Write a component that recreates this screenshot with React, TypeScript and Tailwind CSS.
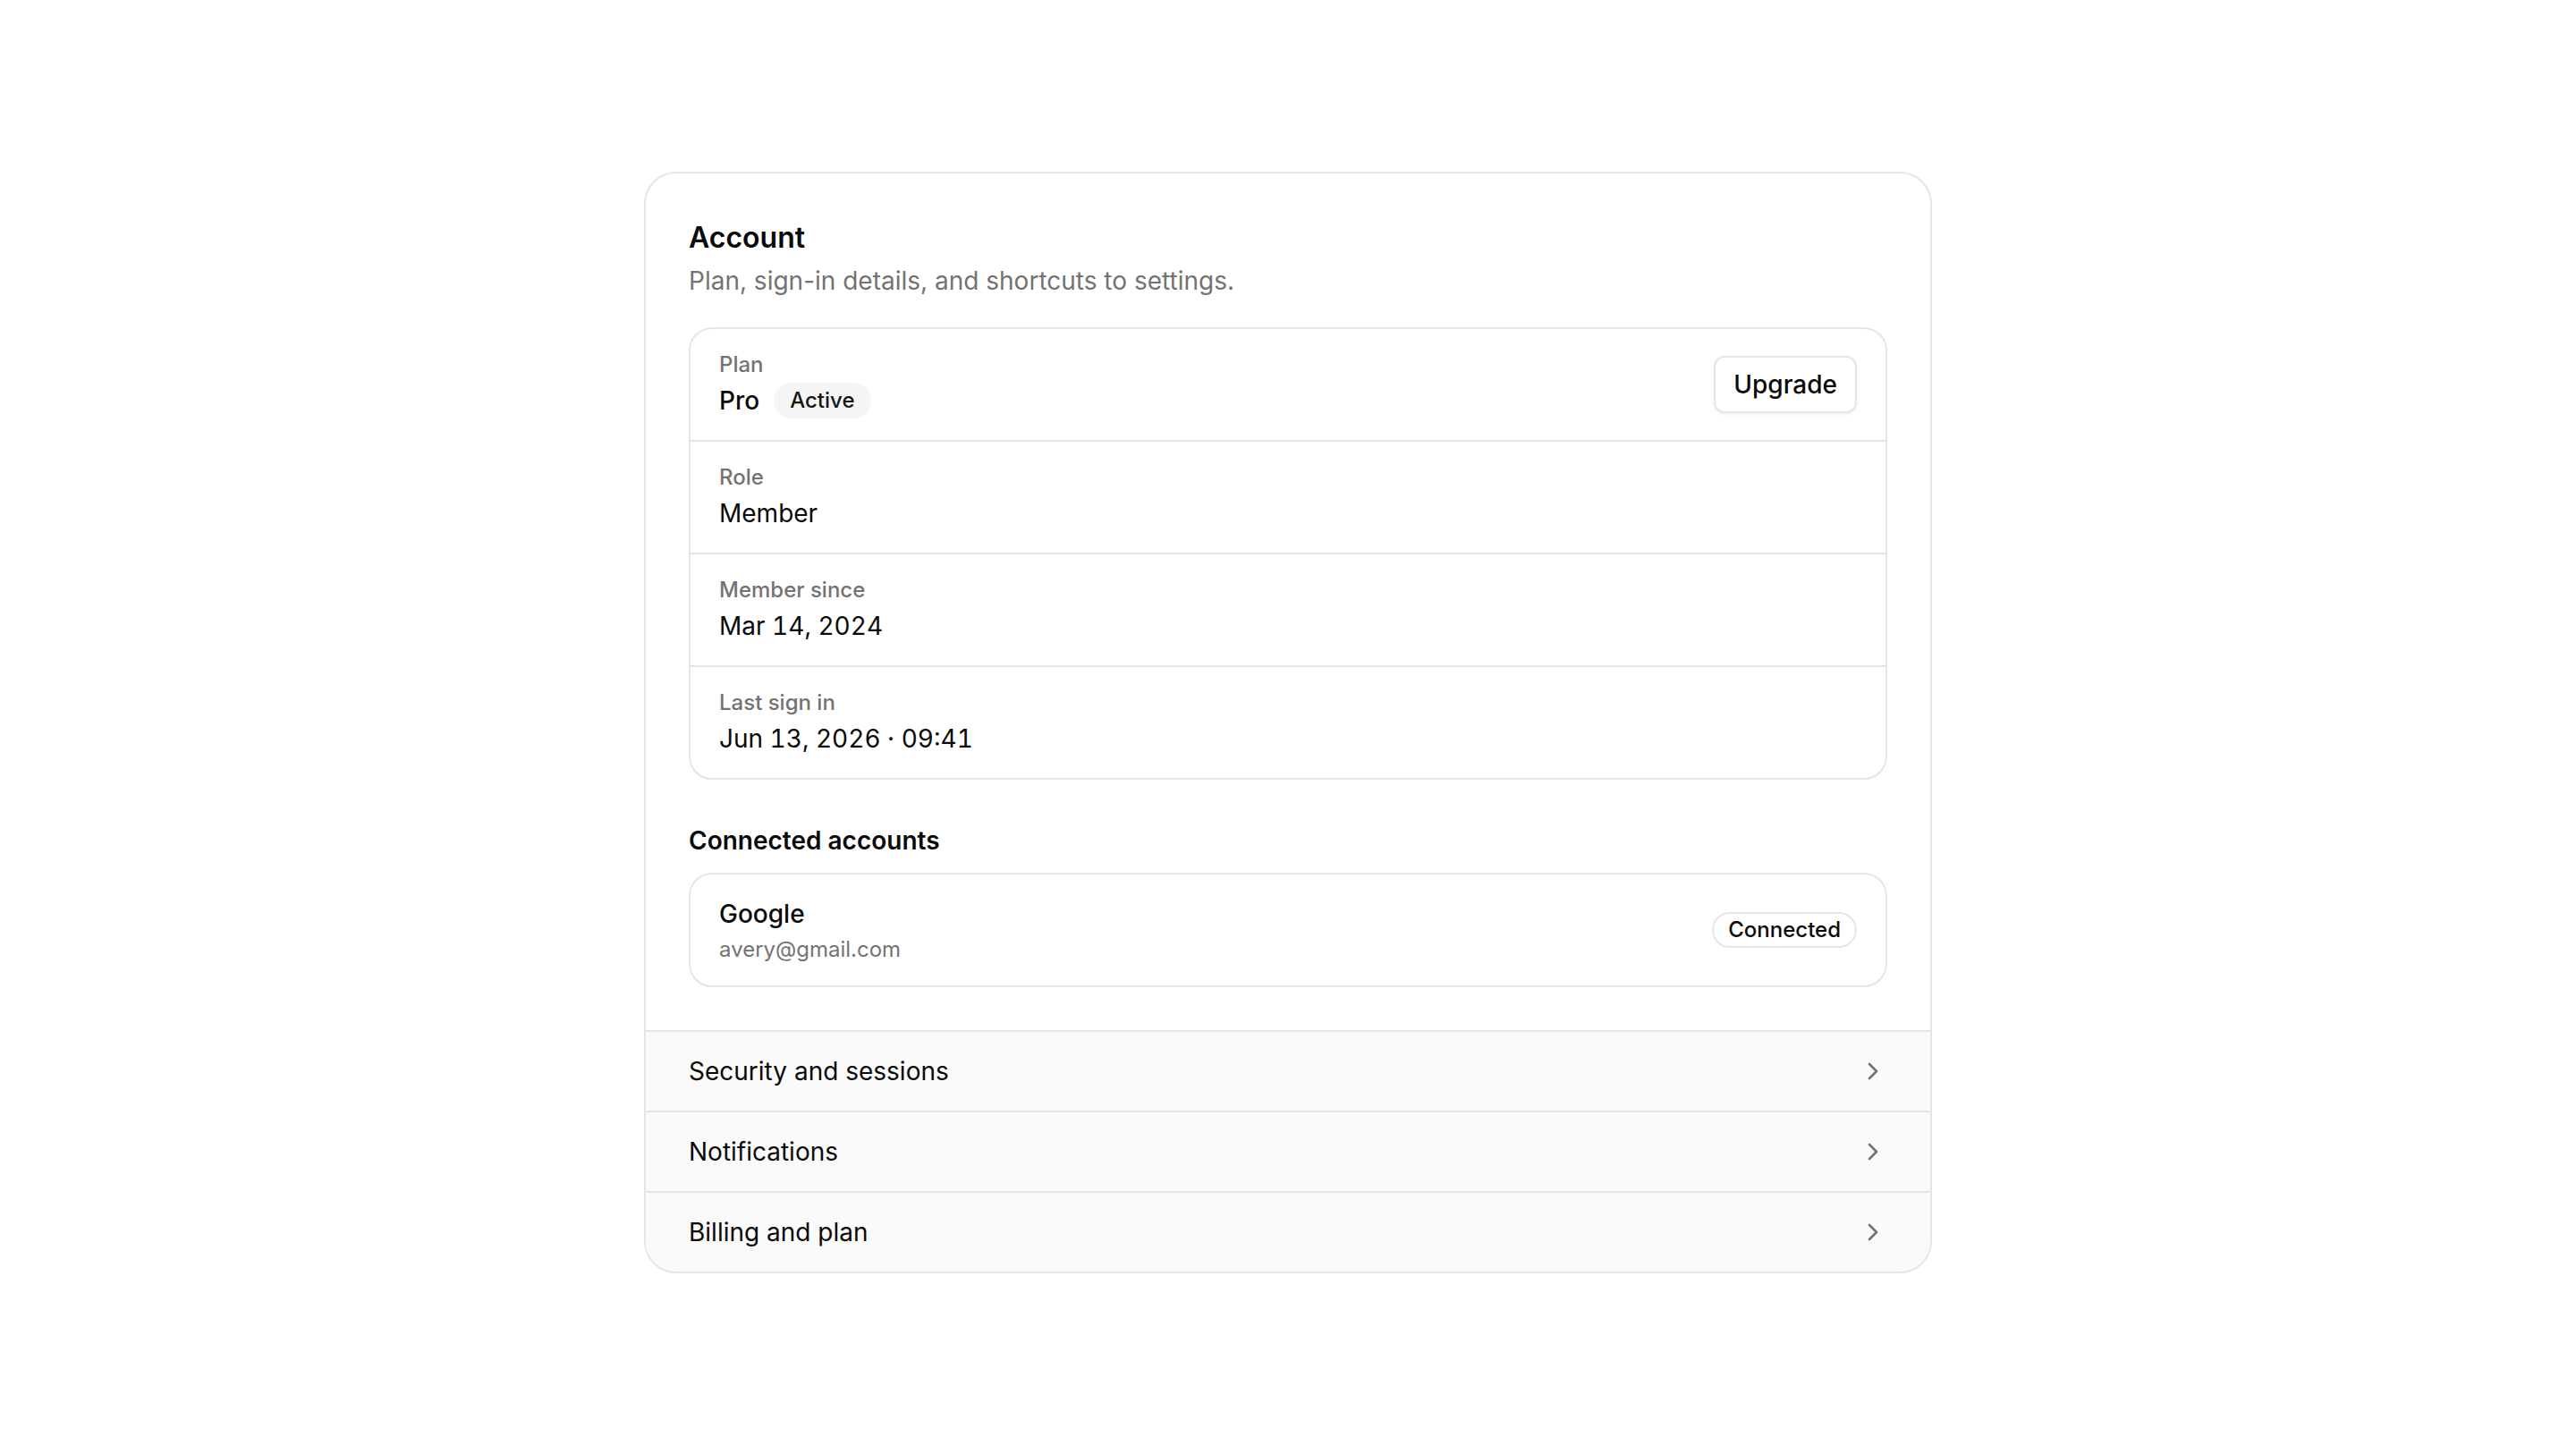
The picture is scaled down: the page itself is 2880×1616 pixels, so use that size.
import React from "react";
import { ChevronRight } from "lucide-react";

function DetailRow({ label, children, action }: { label: string; children: React.ReactNode; action?: React.ReactNode }) {
  return (
    <div className="flex items-center justify-between px-8 py-6">
      <div className="flex flex-col">
        <div className="text-[24px] leading-8 font-medium text-neutral-500">{label}</div>
        <div className="mt-1 text-[28px] leading-10 text-neutral-950 tabular-nums">{children}</div>
      </div>
      {action}
    </div>
  );
}

function LinkRow({ label }: { label: string }) {
  return (
    <div className="flex items-center justify-between border-t-2 border-neutral-200 bg-neutral-50 px-12 py-6">
      <span className="text-[28px] leading-10 text-neutral-950">{label}</span>
      <ChevronRight size={32} strokeWidth={2} className="text-neutral-500" />
    </div>
  );
}

export default function App() {
  return (
    <div className="flex min-h-screen items-center justify-center bg-white font-['Inter',sans-serif] antialiased">
      <div className="w-[1440px] overflow-hidden rounded-[36px] border-2 border-neutral-200 bg-white">
        <div className="p-12">
          <h1 className="text-[32px] leading-12 font-semibold text-neutral-950">Account</h1>
          <p className="mt-1 text-[28px] leading-10 text-neutral-500">
            Plan, sign-in details, and shortcuts to settings.
          </p>

          <div className="mt-8 divide-y-2 divide-neutral-200 rounded-[26px] border-2 border-neutral-200">
            <DetailRow
              label="Plan"
              action={
                <button className="h-16 rounded-xl border-2 border-neutral-200 bg-white px-5 text-[28px] font-medium text-neutral-950 shadow-[0_2px_4px_rgba(0,0,0,0.05)]">
                  Upgrade
                </button>
              }
            >
              <span className="flex items-center gap-4">
                <span className="font-medium">Pro</span>
                <span className="rounded-full bg-neutral-100 px-4.5 py-1 text-[24px] leading-8 font-medium text-neutral-900">
                  Active
                </span>
              </span>
            </DetailRow>
            <DetailRow label="Role">Member</DetailRow>
            <DetailRow label="Member since">Mar 14, 2024</DetailRow>
            <DetailRow label="Last sign in">Jun 13, 2026 · 09:41</DetailRow>
          </div>

          <h2 className="mt-12 text-[28px] leading-10 font-semibold text-neutral-950">Connected accounts</h2>
          <div className="mt-4 flex items-center justify-between rounded-[26px] border-2 border-neutral-200 px-8 py-6">
            <div className="flex flex-col">
              <span className="text-[28px] leading-10 font-medium text-neutral-950">Google</span>
              <span className="mt-1 text-[24px] leading-8 text-neutral-500">avery@gmail.com</span>
            </div>
            <span className="rounded-full border-2 border-neutral-200 px-4 py-0.5 text-[24px] leading-8 font-medium text-neutral-950">
              Connected
            </span>
          </div>
        </div>

        <LinkRow label="Security and sessions" />
        <LinkRow label="Notifications" />
        <LinkRow label="Billing and plan" />
      </div>
    </div>
  );
}
